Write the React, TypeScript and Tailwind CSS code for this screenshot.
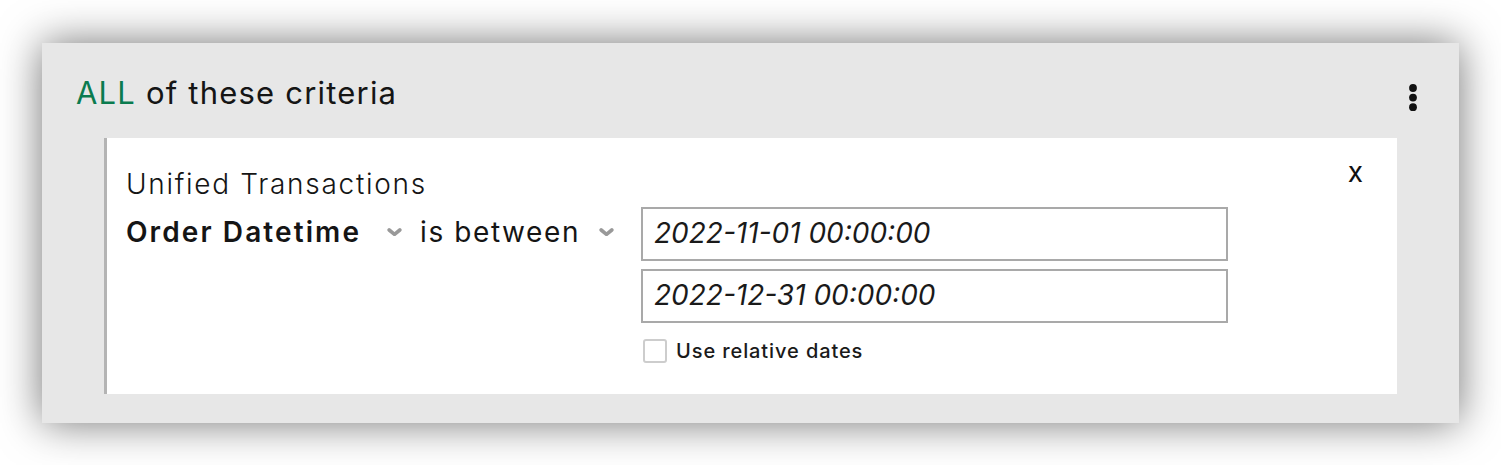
import React from "react";

function Chevron({ className }: { className?: string }) {
  return (
    <svg className={className} width="15" height="8" viewBox="0 0 15 8" fill="none">
      <path d="M2.2 2 L7.5 6.3 L12.8 2" stroke="#999999" strokeWidth="3.6" strokeLinecap="round" strokeLinejoin="round" />
    </svg>
  );
}

function DateBox({ value }: { value: string }) {
  return (
    <div className="h-[54px] border-2 border-[#a9a9a9] bg-white flex items-center pl-[11px] pb-[3px]">
      <span className="text-[28px] leading-[34px] italic text-[#1a1a1a] whitespace-nowrap">{value}</span>
    </div>
  );
}

export default function App() {
  return (
    <div className="w-[1501px] h-[465px] bg-white pt-[43px] pl-[42px] font-[family-name:Inter,sans-serif] text-[#151515]">
      <div className="w-[1417px] h-[380px] bg-[#e7e7e7] shadow-[0_0_40px_rgba(0,0,0,0.55)] pt-[31px]">
        <div className="flex justify-between items-start pl-[34px] pr-[42px]">
          <div className="text-[31px] leading-[38px] tracking-[1.2px] whitespace-nowrap">
            <span className="text-[#0b7b4f]">ALL</span> of these criteria
          </div>
          <svg className="mt-[10px]" width="8" height="28" viewBox="0 0 8 28" fill="#111">
            <circle cx="4" cy="4" r="3.9" />
            <circle cx="4" cy="13.6" r="3.9" />
            <circle cx="4" cy="23.2" r="3.9" />
          </svg>
        </div>
        <div className="ml-[62px] mt-[26px] w-[1293px] h-[256px] bg-white border-l-[3px] border-[#b4b4b4] flex">
          <div className="flex-1 pl-[19px] pt-[29px]">
            <div className="text-[28px] leading-[34px] font-light tracking-[1.7px] whitespace-nowrap">Unified Transactions</div>
            <div className="flex items-start mt-[6px]">
              <div className="w-[261px] pt-[8px] text-[28px] leading-[34px] font-semibold tracking-[2.1px] whitespace-nowrap">Order Datetime</div>
              <Chevron className="mt-[21px]" />
              <div className="ml-[18px] w-[179px] pt-[8px] text-[28px] leading-[34px] tracking-[1.6px] whitespace-nowrap">is between</div>
              <Chevron className="mt-[21px]" />
              <div className="ml-[27px] w-[587px] flex flex-col gap-[8px]">
                <DateBox value="2022-11-01 00:00:00" />
                <DateBox value="2022-12-31 00:00:00" />
                <label className="mt-[8px] flex items-center h-[24px]">
                  <span className="ml-[2px] w-[24px] h-[24px] border-2 border-[#cdcdcd] rounded-[3px] bg-white" />
                  <span className="ml-[9px] text-[20px] leading-[24px] font-medium tracking-[0.9px] text-[#1a1a1a] whitespace-nowrap">Use relative dates</span>
                </label>
              </div>
            </div>
          </div>
          <div className="pt-[17px] pr-[34px] text-[28px] leading-[34px] text-[#111]">x</div>
        </div>
      </div>
    </div>
  );
}
